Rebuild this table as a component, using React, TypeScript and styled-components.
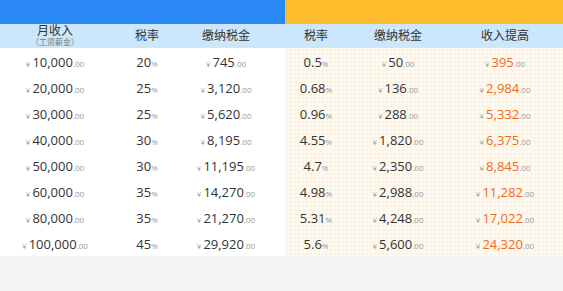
import styled, { createGlobalStyle } from 'styled-components';

const GlobalStyle = createGlobalStyle`
  html, body {
    margin: 0;
    padding: 0;
    background: #f4f4f5;
  }
  body {
    font-family: "Open Sans", "Noto Sans CJK SC", sans-serif;
    color: #333;
  }
`;

type Row = {
  income: string;
  rate: string;
  tax: string;
  newRate: string;
  newTax: string;
  gain: string;
};

const rows: Row[] = [
  { income: '10,000', rate: '20', tax: '745', newRate: '0.5', newTax: '50', gain: '395' },
  { income: '20,000', rate: '25', tax: '3,120', newRate: '0.68', newTax: '136', gain: '2,984' },
  { income: '30,000', rate: '25', tax: '5,620', newRate: '0.96', newTax: '288', gain: '5,332' },
  { income: '40,000', rate: '30', tax: '8,195', newRate: '4.55', newTax: '1,820', gain: '6,375' },
  { income: '50,000', rate: '30', tax: '11,195', newRate: '4.7', newTax: '2,350', gain: '8,845' },
  { income: '60,000', rate: '35', tax: '14,270', newRate: '4.98', newTax: '2,988', gain: '11,282' },
  { income: '80,000', rate: '35', tax: '21,270', newRate: '5.31', newTax: '4,248', gain: '17,022' },
  { income: '100,000', rate: '45', tax: '29,920', newRate: '5.6', newTax: '5,600', gain: '24,320' },
];

function Money({ value, accent }: { value: string; accent?: boolean }) {
  return (
    <Cell>
      <Yen>¥</Yen>
      <Big $accent={accent}>{value}</Big>
      <Small>.00</Small>
    </Cell>
  );
}

function Percent({ value }: { value: string }) {
  return (
    <Cell>
      <Big>{value}</Big>
      <Small>%</Small>
    </Cell>
  );
}

export default function App() {
  return (
    <>
      <GlobalStyle />
      <Page>
        <Board>
          <Panel>
            <TopBar $color="#2a89f4" />
            <HeadRow $cols="110px 74px 84px">
              <HeadCell>
                <HeadLine>月收入</HeadLine>
                <Note>（工资薪金）</Note>
              </HeadCell>
              <HeadCell>税率</HeadCell>
              <HeadCell>缴纳税金</HeadCell>
            </HeadRow>
            {rows.map((r) => (
              <BodyRow key={r.income} $cols="110px 74px 84px">
                <Money value={r.income} />
                <Percent value={r.rate} />
                <Money value={r.tax} />
              </BodyRow>
            ))}
          </Panel>
          <Panel $cream>
            <TopBar $color="#fdbd2c" />
            <HeadRow $cols="62px 102px 112px">
              <HeadCell>税率</HeadCell>
              <HeadCell>缴纳税金</HeadCell>
              <HeadCell>收入提高</HeadCell>
            </HeadRow>
            {rows.map((r) => (
              <BodyRow key={r.income} $cols="62px 102px 112px">
                <Percent value={r.newRate} />
                <Money value={r.newTax} />
                <Money value={r.gain} accent />
              </BodyRow>
            ))}
          </Panel>
        </Board>
      </Page>
    </>
  );
}

const Page = styled.div`
  width: 563px;
  height: 291px;
  background: #f4f4f5;
`;

const Board = styled.div`
  display: grid;
  grid-template-columns: 285px 278px;
`;

const Panel = styled.div<{ $cream?: boolean }>`
  display: flex;
  flex-direction: column;
  background-color: ${(p) => (p.$cream ? '#fdf9ef' : '#ffffff')};
  background-image: ${(p) =>
    p.$cream
      ? 'radial-gradient(circle, rgba(225, 205, 165, 0.16) 0.8px, transparent 1px)'
      : 'none'};
  background-size: 4px 4px;
`;

const TopBar = styled.div<{ $color: string }>`
  height: 24px;
  background: ${(p) => p.$color};
`;

const HeadRow = styled.div<{ $cols: string }>`
  display: grid;
  grid-template-columns: ${(p) => p.$cols};
  height: 24px;
  background: #cbe7fb;
  font-family: "Liberation Sans", "Noto Sans CJK SC", sans-serif;
  font-size: 12px;
  color: #333;
`;

const HeadCell = styled.div`
  display: flex;
  flex-direction: column;
  align-items: center;
  justify-content: center;
  line-height: 14px;
`;

const HeadLine = styled.span`
  display: block;
  height: 14px;
  line-height: 14px;
`;

const Note = styled.span`
  display: block;
  height: 10px;
  font-size: 8px;
  line-height: 10px;
  color: #777;
`;

const BodyRow = styled.div<{ $cols: string }>`
  display: grid;
  grid-template-columns: ${(p) => p.$cols};
  height: 26px;
`;

const Cell = styled.div`
  display: flex;
  align-items: baseline;
  justify-content: center;
  padding-top: 5px;
  white-space: nowrap;
`;

const Big = styled.span<{ $accent?: boolean }>`
  font-size: 13px;
  color: ${(p) => (p.$accent ? '#f0691e' : '#333')};
`;

const Small = styled.span`
  font-size: 8px;
  color: #999;
`;

const Yen = styled(Small)`
  margin-right: 2px;
`;
